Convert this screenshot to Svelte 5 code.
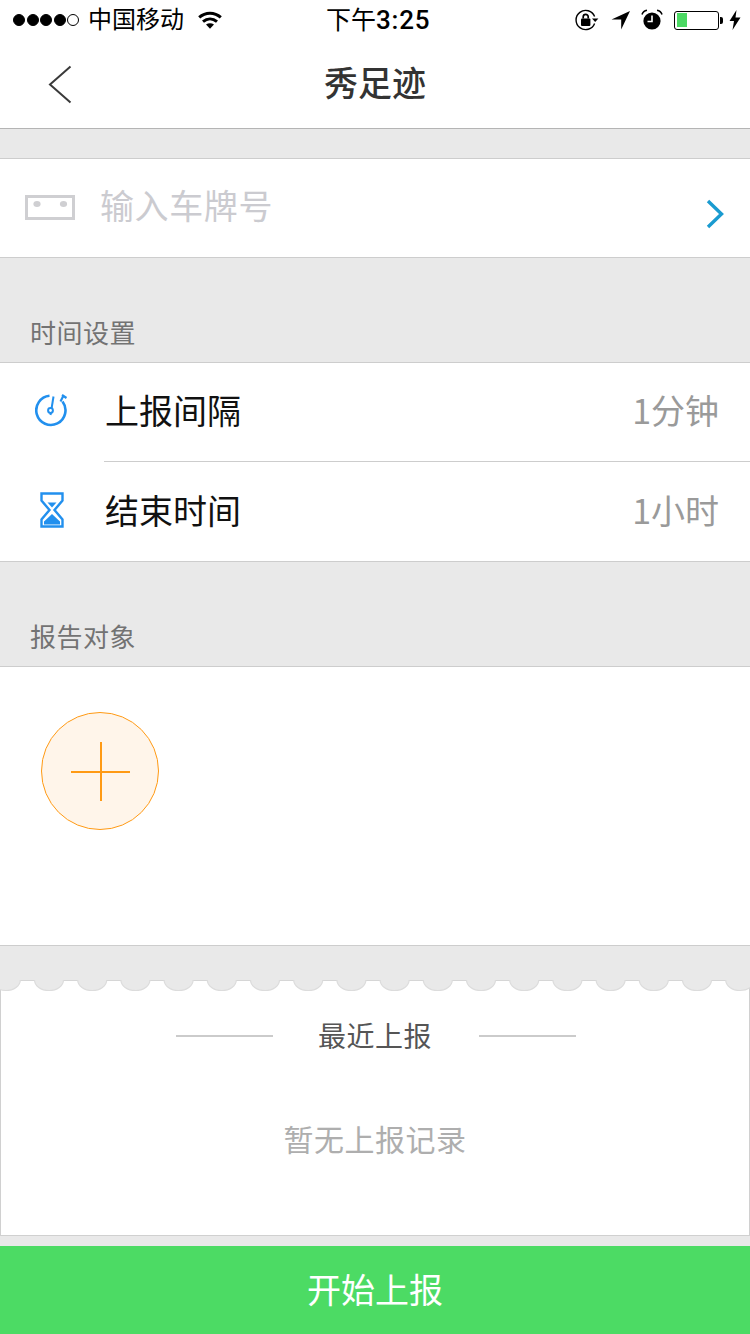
<script>
    // scallop centres along the top edge of the card
    const scallops = Array.from({ length: 18 }, (_, i) => 5.8 + i * 43.2);
    const dots = [1, 1, 1, 1, 0];
</script>

<div class="page">
    <div class="status">
        <div class="status-left">
            <div class="signal">
                {#each dots as d}
                    <span class="dot" class:on={d}></span>
                {/each}
            </div>
            <span class="carrier">中国移动</span>
            <svg class="wifi" width="24" height="18" viewBox="0 0 24 18">
                <path d="M1.2 6.4C7.4 0.8 16.6 0.8 22.8 6.4" fill="none" stroke="#000" stroke-width="3" />
                <path d="M5 10.6C9.2 7 14.8 7 19 10.6" fill="none" stroke="#000" stroke-width="3" />
                <path d="M8 13.4C10.4 11.8 13.6 11.8 16 13.4L12 17.8Z" fill="#000" />
            </svg>
        </div>
        <div class="time">下午<span class="digits">3:25</span></div>
        <div class="status-right">
            <svg width="24" height="22" viewBox="0 0 24 22">
                <path d="M19.6 7.5A9.6 9.6 0 1 0 19.6 14.5" fill="none" stroke="#000" stroke-width="1.4" />
                <path d="M17 9.5h6.4l-3.2 3.5Z" fill="#000" />
                <rect x="6" y="9.5" width="9.4" height="7.4" rx="1" fill="#000" />
                <path d="M8.2 9.5V7.8a2.5 2.5 0 0 1 5 0V9.5" fill="none" stroke="#000" stroke-width="1.7" />
            </svg>
            <svg class="loc" width="20" height="20" viewBox="0 0 20 20">
                <path d="M19 1L0.5 9.6H10.2V19.5Z" fill="#000" />
            </svg>
            <svg class="alarm" width="22" height="22" viewBox="0 0 22 22">
                <circle cx="11" cy="12" r="8.6" fill="#000" />
                <path d="M11 6.5V12.5H6.5" fill="none" stroke="#fff" stroke-width="1.6" />
                <path d="M1 5.5C1.8 3 3.6 1.6 6 1.2M21 5.5C20.2 3 18.4 1.6 16 1.2" fill="none" stroke="#000" stroke-width="1.6" />
            </svg>
            <div class="battery"><div class="charge"></div></div>
            <span class="nub"></span>
            <svg class="bolt" width="12" height="20" viewBox="0 0 12 20">
                <path d="M7.5 0L0.5 11H5L3.5 20L11.5 7.5H6.5Z" fill="#000" />
            </svg>
        </div>
    </div>

    <header class="nav">
        <svg class="back" width="24" height="40" viewBox="0 0 24 40">
            <path d="M22.5 1.5L2 19.5L22.5 37.5" fill="none" stroke="#3a3a3a" stroke-width="2" />
        </svg>
        <h1>秀足迹</h1>
    </header>

    <section class="plate">
        <svg class="plate-icon" width="50" height="25" viewBox="0 0 50 25">
            <rect x="1.5" y="1.5" width="47" height="22" fill="none" stroke="#cfcfd2" stroke-width="3" />
            <ellipse cx="12" cy="9" rx="3.6" ry="3" fill="#cfcfd2" />
            <ellipse cx="38.5" cy="9" rx="3.6" ry="3" fill="#cfcfd2" />
        </svg>
        <span class="placeholder">输入车牌号</span>
        <svg class="chevron" width="18" height="30" viewBox="0 0 18 30">
            <path d="M2 2L15.5 15L2 28" fill="none" stroke="#1a9bd0" stroke-width="3.4" />
        </svg>
    </section>

    <div class="label">时间设置</div>
    <section class="group">
        <div class="row first">
            <svg class="row-icon" width="34" height="34" viewBox="0 0 34 34">
                <path d="M14.5 2.8A14.6 14.6 0 1 0 27.5 8.5" fill="none" stroke="#2290ee" stroke-width="2.6" />
                <path d="M25.5 8.5L28.5 2.5M27 2L31.5 5" fill="none" stroke="#2290ee" stroke-width="2.2" />
                <path d="M18.5 3.5L15.5 22" fill="none" stroke="#2290ee" stroke-width="2" />
                <circle cx="15.5" cy="17.5" r="2.4" fill="#fff" stroke="#2290ee" stroke-width="2" />
            </svg>
            <span class="row-title">上报间隔</span>
            <span class="row-value">1分钟</span>
        </div>
        <div class="row">
            <svg class="row-icon" width="34" height="36" viewBox="0 0 24 36">
                <path d="M1.5 1.5H22.5V8.5L14.5 18L22.5 27.5V34.5H1.5V27.5L9.5 18L1.5 8.5Z" fill="none" stroke="#2290ee" stroke-width="2.4" />
                <path d="M7.5 10.5H16.5L12 15.5Z" fill="#2290ee" />
                <path d="M12 22L20 29.5V32.5H4V29.5Z" fill="#2290ee" />
            </svg>
            <span class="row-title">结束时间</span>
            <span class="row-value">1小时</span>
        </div>
    </section>

    <div class="label">报告对象</div>
    <section class="targets">
        <button class="add" aria-label="添加">
            <svg width="60" height="60" viewBox="0 0 60 60">
                <path d="M31 1V60M1 31H60" fill="none" stroke="#ff9a14" stroke-width="2" />
            </svg>
        </button>
    </section>

    <div class="gap"></div>
    <section class="recent">
        <svg class="scallops" width="750" height="12" viewBox="0 0 750 12">
            {#each scallops as x}
                <path d="M{x - 14.5} 0A14.5 10.5 0 0 0 {x + 14.5} 0Z" fill="#e9e9e9" />
                <path d="M{x - 14.5} 0A14.5 10.5 0 0 0 {x + 14.5} 0" fill="none" stroke="#dcdcdc" stroke-width="1.2" />
            {/each}
        </svg>
        <div class="recent-head">
            <span class="rule"></span>
            <span class="recent-title">最近上报</span>
            <span class="rule"></span>
        </div>
        <p class="empty">暂无上报记录</p>
    </section>

    <button class="start">开始上报</button>
</div>

<style>
    :global(body) {
        margin: 0;
        background: #e9e9e9;
    }

    .page {
        width: 750px;
        height: 1334px;
        display: flex;
        flex-direction: column;
        overflow: hidden;
        background: #e9e9e9;
        font-family: "Noto Sans CJK SC", "Noto Sans", sans-serif;
    }

    /* status bar */
    .status {
        height: 40px;
        background: #fff;
        display: flex;
        align-items: center;
        justify-content: space-between;
        position: relative;
        color: #000;
    }

    .status-left {
        display: flex;
        align-items: center;
        padding-left: 13px;
    }

    .signal {
        display: flex;
        gap: 1.5px;
    }

    .dot {
        width: 12px;
        height: 12px;
        box-sizing: border-box;
        border: 1px solid #000;
        border-radius: 50%;
    }

    .dot.on {
        background: #000;
    }

    .carrier {
        font-size: 24px;
        line-height: 36px;
        margin: 0 0 4px 9px;
    }

    .wifi {
        margin-left: 14px;
    }

    .time {
        position: absolute;
        left: 326px;
        top: 0;
        line-height: 36px;
        font-size: 25px;
    }

    .digits {
        font-family: Roboto, "Liberation Sans", sans-serif;
        font-weight: 500;
        font-size: 26px;
        letter-spacing: 0.8px;
    }

    .status-right {
        display: flex;
        align-items: center;
        padding-right: 9px;
    }

    .loc {
        margin-left: 12px;
    }

    .alarm {
        margin-left: 10px;
    }

    .battery {
        width: 45px;
        height: 19px;
        margin-left: 11px;
        box-sizing: border-box;
        border: 1.5px solid #000;
        border-radius: 3px;
        padding: 1.5px;
        display: flex;
    }

    .charge {
        width: 10px;
        background: #4cd964;
    }

    .nub {
        width: 3px;
        height: 7px;
        margin-left: 1px;
        background: #000;
        border-radius: 0 2px 2px 0;
    }

    .bolt {
        margin-left: 6px;
    }

    /* nav */
    .nav {
        height: 88px;
        background: #fff;
        border-bottom: 1px solid #b4b4b4;
        display: flex;
        align-items: center;
        justify-content: center;
        position: relative;
    }

    .back {
        position: absolute;
        left: 48px;
        top: 25px;
    }

    h1 {
        margin: 0 0 6px;
        font-size: 34px;
        font-weight: 500;
        color: #333;
    }

    /* plate */
    .plate {
        margin-top: 29px;
        height: 98px;
        background: #fff;
        border-top: 1px solid #cdcdcd;
        border-bottom: 1px solid #cdcdcd;
        display: flex;
        align-items: center;
        padding: 0 26px 0 25px;
    }

    .plate-icon {
        margin-bottom: 2px;
    }

    .placeholder {
        margin-left: 25px;
        margin-bottom: 8px;
        font-size: 34px;
        letter-spacing: 0.6px;
        color: #cbcbd0;
    }

    .chevron {
        margin-left: auto;
        margin-top: 12px;
    }

    .label {
        height: 104px;
        box-sizing: border-box;
        padding: 0 0 8px 30px;
        display: flex;
        align-items: flex-end;
        font-size: 26px;
        line-height: 44px;
        letter-spacing: 0.5px;
        color: #737373;
    }

    .group {
        background: #fff;
        border-top: 1px solid #cdcdcd;
        border-bottom: 1px solid #cdcdcd;
    }

    .row {
        height: 99px;
        display: flex;
        align-items: center;
        padding: 0 31px 0 35px;
        position: relative;
    }

    .row.first {
        padding-bottom: 2px;
        box-sizing: border-box;
    }

    .row.first::after {
        content: "";
        position: absolute;
        left: 104px;
        right: 0;
        bottom: 0;
        height: 1px;
        background: #cdcdcd;
    }

    .row-icon {
        width: 34px;
        flex: none;
        margin-bottom: 4px;
    }

    .row-title {
        margin: 0 0 4px 36px;
        font-size: 34px;
        color: #111;
    }

    .row-value {
        margin: 0 0 4px auto;
        font-size: 34px;
        color: #9a9a9a;
    }

    .targets {
        height: 233px;
        background: #fff;
        border-top: 1px solid #cdcdcd;
        border-bottom: 1px solid #cdcdcd;
        padding: 45px 0 0 41px;
    }

    .add {
        width: 118px;
        height: 118px;
        box-sizing: border-box;
        padding: 0;
        border: 1px solid #ff9a14;
        border-radius: 50%;
        background: #fff5ea;
        display: flex;
        align-items: center;
        justify-content: center;
    }

    .gap {
        height: 34px;
        flex: none;
    }

    /* recent card */
    .recent {
        height: 256px;
        flex: none;
        box-sizing: border-box;
        background: #fff;
        border: 1px solid #d0d0d0;
        border-top-color: #d6d6d6;
        position: relative;
        text-align: center;
    }

    .scallops {
        position: absolute;
        left: -1px;
        top: -1px;
    }

    .recent-head {
        display: flex;
        align-items: center;
        justify-content: center;
        margin-top: 33px;
        height: 44px;
        padding-left: 2px;
    }

    .rule {
        width: 97px;
        height: 2px;
        background: #cbcbcb;
    }

    .recent-title {
        margin: 0 47px 3px 45px;
        font-size: 28px;
        letter-spacing: 0.5px;
        color: #555;
    }

    .empty {
        margin: 58px 0 0;
        font-size: 30px;
        line-height: 44px;
        letter-spacing: 0.5px;
        color: #aeaeae;
    }

    .start {
        margin-top: 10px;
        height: 88px;
        flex: none;
        border: none;
        padding: 0 0 4px;
        background: #4cdb64;
        color: #fff;
        font-family: inherit;
        font-size: 34px;
    }
</style>
